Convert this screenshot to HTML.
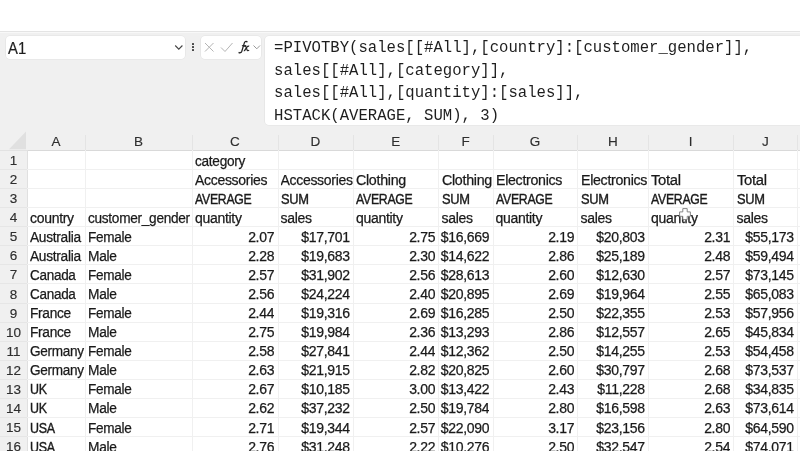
<!DOCTYPE html>
<html><head><meta charset="utf-8"><style>
html,body{margin:0;padding:0;width:800px;height:451px;overflow:hidden;background:#fff;position:relative;font-family:"Liberation Sans",sans-serif;}
.a{position:absolute;}
.fb{position:absolute;left:0;top:32px;width:800px;height:99px;background:#f0f0f0;border-top:1px solid #f8f8f8;}
.box{position:absolute;background:#fff;border-radius:4px;box-shadow:0 0 0 0.6px #e2e2e2;}
.mono{font-family:"Liberation Mono",monospace;}
.hdr{position:absolute;background:#f0f0f0;}
#wrap{position:absolute;left:0;top:0;width:800px;height:451px;will-change:transform;}
.ch{position:absolute;top:131px;height:19px;line-height:19px;text-align:center;font-size:13.5px;color:#2e2e2e;-webkit-text-stroke:0.15px #2e2e2e;}
.rh{position:absolute;left:0;width:27px;text-align:center;font-size:13.5px;color:#2e2e2e;-webkit-text-stroke:0.15px #2e2e2e;}
.c{position:absolute;font-size:14px;letter-spacing:-0.3px;color:#1a1a1a;white-space:nowrap;overflow:hidden;-webkit-text-stroke:0.25px #1a1a1a;}
.c span{display:inline-block;}
.r{text-align:right;}
.vl{position:absolute;width:1px;background:#f0f0f0;}
.hl{position:absolute;height:1px;background:#f0f0f0;}
</style></head><body><div id="wrap">

<div class="a" style="left:0;top:31px;width:800px;height:1px;background:#e4e4e4"></div>
<div class="fb"></div>
<div class="box" style="left:6px;top:36px;width:179px;height:23px;"></div>
<div class="a" style="left:8px;top:35.5px;height:23px;line-height:24px;font-size:16.5px;letter-spacing:0;transform:scaleX(0.9);transform-origin:0 50%;color:#1e1e1e;-webkit-text-stroke:0.2px #1e1e1e">A1</div>
<svg class="a" style="left:174px;top:44px" width="10" height="7" viewBox="0 0 10 7"><path d="M1.2 1.5 L4.8 5.2 L8.4 1.5" fill="none" stroke="#444" stroke-width="1.1"/></svg>
<div class="a" style="left:192.3px;top:43.4px;width:1.9px;height:1.9px;background:#444;border-radius:0.5px"></div>
<div class="a" style="left:192.3px;top:46.3px;width:1.9px;height:1.9px;background:#444;border-radius:0.5px"></div>
<div class="a" style="left:192.3px;top:49.2px;width:1.9px;height:1.9px;background:#444;border-radius:0.5px"></div>
<div class="box" style="left:201px;top:36px;width:60px;height:23px;"></div>
<svg class="a" style="left:201px;top:36px" width="60" height="23" viewBox="0 0 60 23"><path d="M4 7 L12.5 15.5 M12.5 7 L4 15.5" stroke="#b4b4b4" stroke-width="1" fill="none"/><path d="M20 11.5 L24 15.5 L31.5 7" stroke="#b4b4b4" stroke-width="1" fill="none"/><path d="M52.5 9.5 L55.8 12.8 L59 9.5" stroke="#999" stroke-width="1" fill="none"/></svg>
<svg class="a" style="left:230px;top:35px" width="26" height="25" viewBox="230 35 26 25"><path d="M247.3 42.2 C246.8 41 245.2 40.9 244.5 42.4 L241.8 51.2 C241.2 52.8 239.9 53.2 238.6 52.4" stroke="#222" stroke-width="1.25" fill="none"/><path d="M241.9 45.7 L246.3 45.7" stroke="#222" stroke-width="1.1" fill="none"/><path d="M244.3 46.6 C245.4 45.6 245.9 46.2 246.3 47.6 L247 49.8 C247.4 51 248.2 51 249.1 50.1" stroke="#222" stroke-width="1.2" fill="none"/><path d="M249.2 46.3 C248.4 45.8 247.7 46.2 246.9 47.2 L245.2 49.6 C244.7 50.5 244.3 51 243.8 50.6" stroke="#222" stroke-width="1.2" fill="none"/></svg>
<div class="box" style="left:265px;top:36px;width:540px;height:89px;"></div>
<div class="a mono" style="left:274px;top:37.4px;font-size:15.63px;line-height:22.4px;height:22.4px;color:#1e1e1e;white-space:pre;transform:scaleY(1.05);transform-origin:0 16px">=PIVOTBY(sales[[#All],[country]:[customer_gender]],</div>
<div class="a mono" style="left:274px;top:59.8px;font-size:15.63px;line-height:22.4px;height:22.4px;color:#1e1e1e;white-space:pre;transform:scaleY(1.05);transform-origin:0 16px">sales[[#All],[category]],</div>
<div class="a mono" style="left:274px;top:82.3px;font-size:15.63px;line-height:22.4px;height:22.4px;color:#1e1e1e;white-space:pre;transform:scaleY(1.05);transform-origin:0 16px">sales[[#All],[quantity]:[sales]],</div>
<div class="a mono" style="left:274px;top:104.8px;font-size:15.63px;line-height:22.4px;height:22.4px;color:#1e1e1e;white-space:pre;transform:scaleY(1.05);transform-origin:0 16px">HSTACK(AVERAGE, SUM), 3)</div>
<div class="hdr" style="left:0;top:131px;width:800px;height:19px"></div>
<div class="hdr" style="left:0;top:150px;width:27px;height:301px"></div>
<svg class="a" style="left:0;top:125px" width="28" height="26" viewBox="0 125 28 26"><path d="M26 131.6 L26 149.2 L9 149.2 Z" fill="#e0e0e0"/></svg>
<div class="ch" style="left:27.0px;width:58.0px;margin-top:0.5px">A</div>
<div class="vl" style="left:85px;top:135px;height:15px;background:#e4e4e4"></div>
<div class="ch" style="left:85.0px;width:107.0px;margin-top:0.5px">B</div>
<div class="vl" style="left:192px;top:135px;height:15px;background:#e4e4e4"></div>
<div class="ch" style="left:192.0px;width:85.5px;margin-top:0.5px">C</div>
<div class="vl" style="left:278px;top:135px;height:15px;background:#e4e4e4"></div>
<div class="ch" style="left:277.5px;width:75.5px;margin-top:0.5px">D</div>
<div class="vl" style="left:353px;top:135px;height:15px;background:#e4e4e4"></div>
<div class="ch" style="left:353.0px;width:85.5px;margin-top:0.5px">E</div>
<div class="vl" style="left:438px;top:135px;height:15px;background:#e4e4e4"></div>
<div class="ch" style="left:438.5px;width:54.0px;margin-top:0.5px">F</div>
<div class="vl" style="left:493px;top:135px;height:15px;background:#e4e4e4"></div>
<div class="ch" style="left:492.5px;width:85.0px;margin-top:0.5px">G</div>
<div class="vl" style="left:577px;top:135px;height:15px;background:#e4e4e4"></div>
<div class="ch" style="left:577.5px;width:70.5px;margin-top:0.5px">H</div>
<div class="vl" style="left:648px;top:135px;height:15px;background:#e4e4e4"></div>
<div class="ch" style="left:648.0px;width:85.5px;margin-top:0.5px">I</div>
<div class="vl" style="left:733px;top:135px;height:15px;background:#e4e4e4"></div>
<div class="ch" style="left:733.5px;width:63.5px;margin-top:0.5px">J</div>
<div class="vl" style="left:797px;top:135px;height:15px;background:#e4e4e4"></div>
<div class="hl" style="left:27px;top:150px;width:800px;background:#d9d9d9"></div>
<div class="hl" style="left:0;top:150px;width:27px;background:#e2e2e2"></div>
<div class="vl" style="left:27px;top:150px;height:301px;background:#e0e0e0"></div>
<div class="vl" style="left:85px;top:150px;height:301px"></div>
<div class="vl" style="left:192px;top:150px;height:301px"></div>
<div class="vl" style="left:278px;top:150px;height:301px"></div>
<div class="vl" style="left:353px;top:150px;height:301px"></div>
<div class="vl" style="left:438px;top:150px;height:301px"></div>
<div class="vl" style="left:493px;top:150px;height:301px"></div>
<div class="vl" style="left:577px;top:150px;height:301px"></div>
<div class="vl" style="left:648px;top:150px;height:301px"></div>
<div class="vl" style="left:733px;top:150px;height:301px"></div>
<div class="vl" style="left:797px;top:150px;height:301px"></div>
<div class="hl" style="left:27px;top:169px;width:800px"></div>
<div class="hl" style="left:0px;top:169px;width:27px;background:#e6e6e6"></div>
<div class="rh" style="top:151.0px;height:19.1px;line-height:19.1px">1</div>
<div class="c" style="left:195.0px;top:151.5px;height:19.1px;line-height:19.1px;width:602.0px"><span style="transform:scaleX(0.975);transform-origin:left 50%">category</span></div>
<div class="hl" style="left:27px;top:188px;width:800px"></div>
<div class="hl" style="left:0px;top:188px;width:27px;background:#e6e6e6"></div>
<div class="rh" style="top:170.1px;height:19.1px;line-height:19.1px">2</div>
<div class="c" style="left:195.0px;top:170.6px;height:19.1px;line-height:19.1px;width:82.5px">Accessories</div>
<div class="c" style="left:280.5px;top:170.6px;height:19.1px;line-height:19.1px;width:72.5px">Accessories</div>
<div class="c" style="left:356.0px;top:170.6px;height:19.1px;line-height:19.1px;width:82.5px"><span style="transform:scaleX(1.020);transform-origin:left 50%">Clothing</span></div>
<div class="c" style="left:441.5px;top:170.6px;height:19.1px;line-height:19.1px;width:51.0px"><span style="transform:scaleX(1.020);transform-origin:left 50%">Clothing</span></div>
<div class="c" style="left:495.5px;top:170.6px;height:19.1px;line-height:19.1px;width:82.0px"><span style="transform:scaleX(1.015);transform-origin:left 50%">Electronics</span></div>
<div class="c" style="left:580.5px;top:170.6px;height:19.1px;line-height:19.1px;width:67.5px"><span style="transform:scaleX(1.015);transform-origin:left 50%">Electronics</span></div>
<div class="c" style="left:651.0px;top:170.6px;height:19.1px;line-height:19.1px;width:82.5px"><span style="transform:scaleX(1.060);transform-origin:left 50%">Total</span></div>
<div class="c" style="left:736.5px;top:170.6px;height:19.1px;line-height:19.1px;width:60.5px"><span style="transform:scaleX(1.060);transform-origin:left 50%">Total</span></div>
<div class="hl" style="left:27px;top:207px;width:800px"></div>
<div class="hl" style="left:0px;top:207px;width:27px;background:#e6e6e6"></div>
<div class="rh" style="top:189.1px;height:19.1px;line-height:19.1px">3</div>
<div class="c" style="left:195.0px;top:189.6px;height:19.1px;line-height:19.1px;width:82.5px"><span style="transform:scaleX(0.875);transform-origin:left 50%;-webkit-text-stroke:0.38px #1a1a1a">AVERAGE</span></div>
<div class="c" style="left:280.5px;top:189.6px;height:19.1px;line-height:19.1px;width:72.5px"><span style="transform:scaleX(0.920);transform-origin:left 50%;-webkit-text-stroke:0.38px #1a1a1a">SUM</span></div>
<div class="c" style="left:356.0px;top:189.6px;height:19.1px;line-height:19.1px;width:82.5px"><span style="transform:scaleX(0.875);transform-origin:left 50%;-webkit-text-stroke:0.38px #1a1a1a">AVERAGE</span></div>
<div class="c" style="left:441.5px;top:189.6px;height:19.1px;line-height:19.1px;width:51.0px"><span style="transform:scaleX(0.920);transform-origin:left 50%;-webkit-text-stroke:0.38px #1a1a1a">SUM</span></div>
<div class="c" style="left:495.5px;top:189.6px;height:19.1px;line-height:19.1px;width:82.0px"><span style="transform:scaleX(0.875);transform-origin:left 50%;-webkit-text-stroke:0.38px #1a1a1a">AVERAGE</span></div>
<div class="c" style="left:580.5px;top:189.6px;height:19.1px;line-height:19.1px;width:67.5px"><span style="transform:scaleX(0.920);transform-origin:left 50%;-webkit-text-stroke:0.38px #1a1a1a">SUM</span></div>
<div class="c" style="left:651.0px;top:189.6px;height:19.1px;line-height:19.1px;width:82.5px"><span style="transform:scaleX(0.875);transform-origin:left 50%;-webkit-text-stroke:0.38px #1a1a1a">AVERAGE</span></div>
<div class="c" style="left:736.5px;top:189.6px;height:19.1px;line-height:19.1px;width:60.5px"><span style="transform:scaleX(0.920);transform-origin:left 50%;-webkit-text-stroke:0.38px #1a1a1a">SUM</span></div>
<div class="hl" style="left:27px;top:226px;width:800px"></div>
<div class="hl" style="left:0px;top:226px;width:27px;background:#e6e6e6"></div>
<div class="rh" style="top:208.2px;height:19.1px;line-height:19.1px">4</div>
<div class="c" style="left:30.0px;top:208.7px;height:19.1px;line-height:19.1px;width:55.0px"><span style="transform:scaleX(1.000);transform-origin:left 50%">country</span></div>
<div class="c" style="left:88.0px;top:208.7px;height:19.1px;line-height:19.1px;width:104.0px"><span style="transform:scaleX(0.975);transform-origin:left 50%">customer_gender</span></div>
<div class="c" style="left:195.0px;top:208.7px;height:19.1px;line-height:19.1px;width:82.5px">quantity</div>
<div class="c" style="left:280.5px;top:208.7px;height:19.1px;line-height:19.1px;width:72.5px">sales</div>
<div class="c" style="left:356.0px;top:208.7px;height:19.1px;line-height:19.1px;width:82.5px">quantity</div>
<div class="c" style="left:441.5px;top:208.7px;height:19.1px;line-height:19.1px;width:51.0px">sales</div>
<div class="c" style="left:495.5px;top:208.7px;height:19.1px;line-height:19.1px;width:82.0px">quantity</div>
<div class="c" style="left:580.5px;top:208.7px;height:19.1px;line-height:19.1px;width:67.5px">sales</div>
<div class="c" style="left:651.0px;top:208.7px;height:19.1px;line-height:19.1px;width:82.5px">quantity</div>
<div class="c" style="left:736.5px;top:208.7px;height:19.1px;line-height:19.1px;width:60.5px">sales</div>
<div class="hl" style="left:27px;top:245px;width:800px"></div>
<div class="hl" style="left:0px;top:245px;width:27px;background:#e6e6e6"></div>
<div class="rh" style="top:227.3px;height:19.1px;line-height:19.1px">5</div>
<div class="c" style="left:30.0px;top:227.8px;height:19.1px;line-height:19.1px;width:55.0px"><span style="transform:scaleX(0.980);transform-origin:left 50%">Australia</span></div>
<div class="c" style="left:88.0px;top:227.8px;height:19.1px;line-height:19.1px;width:104.0px"><span style="transform:scaleX(0.970);transform-origin:left 50%">Female</span></div>
<div class="c r" style="left:192.0px;width:82.2px;top:227.8px;height:19.1px;line-height:19.1px">2.07</div>
<div class="c r" style="left:277.5px;width:72.2px;top:227.8px;height:19.1px;line-height:19.1px">$17,701</div>
<div class="c r" style="left:353.0px;width:82.2px;top:227.8px;height:19.1px;line-height:19.1px">2.75</div>
<div class="c r" style="left:438.5px;width:50.7px;top:227.8px;height:19.1px;line-height:19.1px">$16,669</div>
<div class="c r" style="left:492.5px;width:81.7px;top:227.8px;height:19.1px;line-height:19.1px">2.19</div>
<div class="c r" style="left:577.5px;width:67.2px;top:227.8px;height:19.1px;line-height:19.1px">$20,803</div>
<div class="c r" style="left:648.0px;width:82.2px;top:227.8px;height:19.1px;line-height:19.1px">2.31</div>
<div class="c r" style="left:733.5px;width:60.2px;top:227.8px;height:19.1px;line-height:19.1px">$55,173</div>
<div class="hl" style="left:27px;top:264px;width:800px"></div>
<div class="hl" style="left:0px;top:264px;width:27px;background:#e6e6e6"></div>
<div class="rh" style="top:246.3px;height:19.1px;line-height:19.1px">6</div>
<div class="c" style="left:30.0px;top:246.8px;height:19.1px;line-height:19.1px;width:55.0px"><span style="transform:scaleX(0.980);transform-origin:left 50%">Australia</span></div>
<div class="c" style="left:88.0px;top:246.8px;height:19.1px;line-height:19.1px;width:104.0px"><span style="transform:scaleX(0.980);transform-origin:left 50%">Male</span></div>
<div class="c r" style="left:192.0px;width:82.2px;top:246.8px;height:19.1px;line-height:19.1px">2.28</div>
<div class="c r" style="left:277.5px;width:72.2px;top:246.8px;height:19.1px;line-height:19.1px">$19,683</div>
<div class="c r" style="left:353.0px;width:82.2px;top:246.8px;height:19.1px;line-height:19.1px">2.30</div>
<div class="c r" style="left:438.5px;width:50.7px;top:246.8px;height:19.1px;line-height:19.1px">$14,622</div>
<div class="c r" style="left:492.5px;width:81.7px;top:246.8px;height:19.1px;line-height:19.1px">2.86</div>
<div class="c r" style="left:577.5px;width:67.2px;top:246.8px;height:19.1px;line-height:19.1px">$25,189</div>
<div class="c r" style="left:648.0px;width:82.2px;top:246.8px;height:19.1px;line-height:19.1px">2.48</div>
<div class="c r" style="left:733.5px;width:60.2px;top:246.8px;height:19.1px;line-height:19.1px">$59,494</div>
<div class="hl" style="left:27px;top:283px;width:800px"></div>
<div class="hl" style="left:0px;top:283px;width:27px;background:#e6e6e6"></div>
<div class="rh" style="top:265.4px;height:19.1px;line-height:19.1px">7</div>
<div class="c" style="left:30.0px;top:265.9px;height:19.1px;line-height:19.1px;width:55.0px"><span style="transform:scaleX(0.965);transform-origin:left 50%">Canada</span></div>
<div class="c" style="left:88.0px;top:265.9px;height:19.1px;line-height:19.1px;width:104.0px"><span style="transform:scaleX(0.970);transform-origin:left 50%">Female</span></div>
<div class="c r" style="left:192.0px;width:82.2px;top:265.9px;height:19.1px;line-height:19.1px">2.57</div>
<div class="c r" style="left:277.5px;width:72.2px;top:265.9px;height:19.1px;line-height:19.1px">$31,902</div>
<div class="c r" style="left:353.0px;width:82.2px;top:265.9px;height:19.1px;line-height:19.1px">2.56</div>
<div class="c r" style="left:438.5px;width:50.7px;top:265.9px;height:19.1px;line-height:19.1px">$28,613</div>
<div class="c r" style="left:492.5px;width:81.7px;top:265.9px;height:19.1px;line-height:19.1px">2.60</div>
<div class="c r" style="left:577.5px;width:67.2px;top:265.9px;height:19.1px;line-height:19.1px">$12,630</div>
<div class="c r" style="left:648.0px;width:82.2px;top:265.9px;height:19.1px;line-height:19.1px">2.57</div>
<div class="c r" style="left:733.5px;width:60.2px;top:265.9px;height:19.1px;line-height:19.1px">$73,145</div>
<div class="hl" style="left:27px;top:303px;width:800px"></div>
<div class="hl" style="left:0px;top:303px;width:27px;background:#e6e6e6"></div>
<div class="rh" style="top:284.5px;height:19.1px;line-height:19.1px">8</div>
<div class="c" style="left:30.0px;top:285.0px;height:19.1px;line-height:19.1px;width:55.0px"><span style="transform:scaleX(0.965);transform-origin:left 50%">Canada</span></div>
<div class="c" style="left:88.0px;top:285.0px;height:19.1px;line-height:19.1px;width:104.0px"><span style="transform:scaleX(0.980);transform-origin:left 50%">Male</span></div>
<div class="c r" style="left:192.0px;width:82.2px;top:285.0px;height:19.1px;line-height:19.1px">2.56</div>
<div class="c r" style="left:277.5px;width:72.2px;top:285.0px;height:19.1px;line-height:19.1px">$24,224</div>
<div class="c r" style="left:353.0px;width:82.2px;top:285.0px;height:19.1px;line-height:19.1px">2.40</div>
<div class="c r" style="left:438.5px;width:50.7px;top:285.0px;height:19.1px;line-height:19.1px">$20,895</div>
<div class="c r" style="left:492.5px;width:81.7px;top:285.0px;height:19.1px;line-height:19.1px">2.69</div>
<div class="c r" style="left:577.5px;width:67.2px;top:285.0px;height:19.1px;line-height:19.1px">$19,964</div>
<div class="c r" style="left:648.0px;width:82.2px;top:285.0px;height:19.1px;line-height:19.1px">2.55</div>
<div class="c r" style="left:733.5px;width:60.2px;top:285.0px;height:19.1px;line-height:19.1px">$65,083</div>
<div class="hl" style="left:27px;top:322px;width:800px"></div>
<div class="hl" style="left:0px;top:322px;width:27px;background:#e6e6e6"></div>
<div class="rh" style="top:303.6px;height:19.1px;line-height:19.1px">9</div>
<div class="c" style="left:30.0px;top:304.1px;height:19.1px;line-height:19.1px;width:55.0px"><span style="transform:scaleX(0.980);transform-origin:left 50%">France</span></div>
<div class="c" style="left:88.0px;top:304.1px;height:19.1px;line-height:19.1px;width:104.0px"><span style="transform:scaleX(0.970);transform-origin:left 50%">Female</span></div>
<div class="c r" style="left:192.0px;width:82.2px;top:304.1px;height:19.1px;line-height:19.1px">2.44</div>
<div class="c r" style="left:277.5px;width:72.2px;top:304.1px;height:19.1px;line-height:19.1px">$19,316</div>
<div class="c r" style="left:353.0px;width:82.2px;top:304.1px;height:19.1px;line-height:19.1px">2.69</div>
<div class="c r" style="left:438.5px;width:50.7px;top:304.1px;height:19.1px;line-height:19.1px">$16,285</div>
<div class="c r" style="left:492.5px;width:81.7px;top:304.1px;height:19.1px;line-height:19.1px">2.50</div>
<div class="c r" style="left:577.5px;width:67.2px;top:304.1px;height:19.1px;line-height:19.1px">$22,355</div>
<div class="c r" style="left:648.0px;width:82.2px;top:304.1px;height:19.1px;line-height:19.1px">2.53</div>
<div class="c r" style="left:733.5px;width:60.2px;top:304.1px;height:19.1px;line-height:19.1px">$57,956</div>
<div class="hl" style="left:27px;top:341px;width:800px"></div>
<div class="hl" style="left:0px;top:341px;width:27px;background:#e6e6e6"></div>
<div class="rh" style="top:322.6px;height:19.1px;line-height:19.1px">10</div>
<div class="c" style="left:30.0px;top:323.1px;height:19.1px;line-height:19.1px;width:55.0px"><span style="transform:scaleX(0.980);transform-origin:left 50%">France</span></div>
<div class="c" style="left:88.0px;top:323.1px;height:19.1px;line-height:19.1px;width:104.0px"><span style="transform:scaleX(0.980);transform-origin:left 50%">Male</span></div>
<div class="c r" style="left:192.0px;width:82.2px;top:323.1px;height:19.1px;line-height:19.1px">2.75</div>
<div class="c r" style="left:277.5px;width:72.2px;top:323.1px;height:19.1px;line-height:19.1px">$19,984</div>
<div class="c r" style="left:353.0px;width:82.2px;top:323.1px;height:19.1px;line-height:19.1px">2.36</div>
<div class="c r" style="left:438.5px;width:50.7px;top:323.1px;height:19.1px;line-height:19.1px">$13,293</div>
<div class="c r" style="left:492.5px;width:81.7px;top:323.1px;height:19.1px;line-height:19.1px">2.86</div>
<div class="c r" style="left:577.5px;width:67.2px;top:323.1px;height:19.1px;line-height:19.1px">$12,557</div>
<div class="c r" style="left:648.0px;width:82.2px;top:323.1px;height:19.1px;line-height:19.1px">2.65</div>
<div class="c r" style="left:733.5px;width:60.2px;top:323.1px;height:19.1px;line-height:19.1px">$45,834</div>
<div class="hl" style="left:27px;top:360px;width:800px"></div>
<div class="hl" style="left:0px;top:360px;width:27px;background:#e6e6e6"></div>
<div class="rh" style="top:341.7px;height:19.1px;line-height:19.1px">11</div>
<div class="c" style="left:30.0px;top:342.2px;height:19.1px;line-height:19.1px;width:55.0px"><span style="transform:scaleX(0.970);transform-origin:left 50%">Germany</span></div>
<div class="c" style="left:88.0px;top:342.2px;height:19.1px;line-height:19.1px;width:104.0px"><span style="transform:scaleX(0.970);transform-origin:left 50%">Female</span></div>
<div class="c r" style="left:192.0px;width:82.2px;top:342.2px;height:19.1px;line-height:19.1px">2.58</div>
<div class="c r" style="left:277.5px;width:72.2px;top:342.2px;height:19.1px;line-height:19.1px">$27,841</div>
<div class="c r" style="left:353.0px;width:82.2px;top:342.2px;height:19.1px;line-height:19.1px">2.44</div>
<div class="c r" style="left:438.5px;width:50.7px;top:342.2px;height:19.1px;line-height:19.1px">$12,362</div>
<div class="c r" style="left:492.5px;width:81.7px;top:342.2px;height:19.1px;line-height:19.1px">2.50</div>
<div class="c r" style="left:577.5px;width:67.2px;top:342.2px;height:19.1px;line-height:19.1px">$14,255</div>
<div class="c r" style="left:648.0px;width:82.2px;top:342.2px;height:19.1px;line-height:19.1px">2.53</div>
<div class="c r" style="left:733.5px;width:60.2px;top:342.2px;height:19.1px;line-height:19.1px">$54,458</div>
<div class="hl" style="left:27px;top:379px;width:800px"></div>
<div class="hl" style="left:0px;top:379px;width:27px;background:#e6e6e6"></div>
<div class="rh" style="top:360.8px;height:19.1px;line-height:19.1px">12</div>
<div class="c" style="left:30.0px;top:361.3px;height:19.1px;line-height:19.1px;width:55.0px"><span style="transform:scaleX(0.970);transform-origin:left 50%">Germany</span></div>
<div class="c" style="left:88.0px;top:361.3px;height:19.1px;line-height:19.1px;width:104.0px"><span style="transform:scaleX(0.980);transform-origin:left 50%">Male</span></div>
<div class="c r" style="left:192.0px;width:82.2px;top:361.3px;height:19.1px;line-height:19.1px">2.63</div>
<div class="c r" style="left:277.5px;width:72.2px;top:361.3px;height:19.1px;line-height:19.1px">$21,915</div>
<div class="c r" style="left:353.0px;width:82.2px;top:361.3px;height:19.1px;line-height:19.1px">2.82</div>
<div class="c r" style="left:438.5px;width:50.7px;top:361.3px;height:19.1px;line-height:19.1px">$20,825</div>
<div class="c r" style="left:492.5px;width:81.7px;top:361.3px;height:19.1px;line-height:19.1px">2.60</div>
<div class="c r" style="left:577.5px;width:67.2px;top:361.3px;height:19.1px;line-height:19.1px">$30,797</div>
<div class="c r" style="left:648.0px;width:82.2px;top:361.3px;height:19.1px;line-height:19.1px">2.68</div>
<div class="c r" style="left:733.5px;width:60.2px;top:361.3px;height:19.1px;line-height:19.1px">$73,537</div>
<div class="hl" style="left:27px;top:398px;width:800px"></div>
<div class="hl" style="left:0px;top:398px;width:27px;background:#e6e6e6"></div>
<div class="rh" style="top:379.8px;height:19.1px;line-height:19.1px">13</div>
<div class="c" style="left:30.0px;top:380.3px;height:19.1px;line-height:19.1px;width:55.0px"><span style="transform:scaleX(0.890);transform-origin:left 50%;-webkit-text-stroke:0.38px #1a1a1a">UK</span></div>
<div class="c" style="left:88.0px;top:380.3px;height:19.1px;line-height:19.1px;width:104.0px"><span style="transform:scaleX(0.970);transform-origin:left 50%">Female</span></div>
<div class="c r" style="left:192.0px;width:82.2px;top:380.3px;height:19.1px;line-height:19.1px">2.67</div>
<div class="c r" style="left:277.5px;width:72.2px;top:380.3px;height:19.1px;line-height:19.1px">$10,185</div>
<div class="c r" style="left:353.0px;width:82.2px;top:380.3px;height:19.1px;line-height:19.1px">3.00</div>
<div class="c r" style="left:438.5px;width:50.7px;top:380.3px;height:19.1px;line-height:19.1px">$13,422</div>
<div class="c r" style="left:492.5px;width:81.7px;top:380.3px;height:19.1px;line-height:19.1px">2.43</div>
<div class="c r" style="left:577.5px;width:67.2px;top:380.3px;height:19.1px;line-height:19.1px">$11,228</div>
<div class="c r" style="left:648.0px;width:82.2px;top:380.3px;height:19.1px;line-height:19.1px">2.68</div>
<div class="c r" style="left:733.5px;width:60.2px;top:380.3px;height:19.1px;line-height:19.1px">$34,835</div>
<div class="hl" style="left:27px;top:417px;width:800px"></div>
<div class="hl" style="left:0px;top:417px;width:27px;background:#e6e6e6"></div>
<div class="rh" style="top:398.9px;height:19.1px;line-height:19.1px">14</div>
<div class="c" style="left:30.0px;top:399.4px;height:19.1px;line-height:19.1px;width:55.0px"><span style="transform:scaleX(0.890);transform-origin:left 50%;-webkit-text-stroke:0.38px #1a1a1a">UK</span></div>
<div class="c" style="left:88.0px;top:399.4px;height:19.1px;line-height:19.1px;width:104.0px"><span style="transform:scaleX(0.980);transform-origin:left 50%">Male</span></div>
<div class="c r" style="left:192.0px;width:82.2px;top:399.4px;height:19.1px;line-height:19.1px">2.62</div>
<div class="c r" style="left:277.5px;width:72.2px;top:399.4px;height:19.1px;line-height:19.1px">$37,232</div>
<div class="c r" style="left:353.0px;width:82.2px;top:399.4px;height:19.1px;line-height:19.1px">2.50</div>
<div class="c r" style="left:438.5px;width:50.7px;top:399.4px;height:19.1px;line-height:19.1px">$19,784</div>
<div class="c r" style="left:492.5px;width:81.7px;top:399.4px;height:19.1px;line-height:19.1px">2.80</div>
<div class="c r" style="left:577.5px;width:67.2px;top:399.4px;height:19.1px;line-height:19.1px">$16,598</div>
<div class="c r" style="left:648.0px;width:82.2px;top:399.4px;height:19.1px;line-height:19.1px">2.63</div>
<div class="c r" style="left:733.5px;width:60.2px;top:399.4px;height:19.1px;line-height:19.1px">$73,614</div>
<div class="hl" style="left:27px;top:436px;width:800px"></div>
<div class="hl" style="left:0px;top:436px;width:27px;background:#e6e6e6"></div>
<div class="rh" style="top:418.0px;height:19.1px;line-height:19.1px">15</div>
<div class="c" style="left:30.0px;top:418.5px;height:19.1px;line-height:19.1px;width:55.0px"><span style="transform:scaleX(0.890);transform-origin:left 50%;-webkit-text-stroke:0.38px #1a1a1a">USA</span></div>
<div class="c" style="left:88.0px;top:418.5px;height:19.1px;line-height:19.1px;width:104.0px"><span style="transform:scaleX(0.970);transform-origin:left 50%">Female</span></div>
<div class="c r" style="left:192.0px;width:82.2px;top:418.5px;height:19.1px;line-height:19.1px">2.71</div>
<div class="c r" style="left:277.5px;width:72.2px;top:418.5px;height:19.1px;line-height:19.1px">$19,344</div>
<div class="c r" style="left:353.0px;width:82.2px;top:418.5px;height:19.1px;line-height:19.1px">2.57</div>
<div class="c r" style="left:438.5px;width:50.7px;top:418.5px;height:19.1px;line-height:19.1px">$22,090</div>
<div class="c r" style="left:492.5px;width:81.7px;top:418.5px;height:19.1px;line-height:19.1px">3.17</div>
<div class="c r" style="left:577.5px;width:67.2px;top:418.5px;height:19.1px;line-height:19.1px">$23,156</div>
<div class="c r" style="left:648.0px;width:82.2px;top:418.5px;height:19.1px;line-height:19.1px">2.80</div>
<div class="c r" style="left:733.5px;width:60.2px;top:418.5px;height:19.1px;line-height:19.1px">$64,590</div>
<div class="hl" style="left:27px;top:455px;width:800px"></div>
<div class="hl" style="left:0px;top:455px;width:27px;background:#e6e6e6"></div>
<div class="rh" style="top:437.1px;height:19.1px;line-height:19.1px">16</div>
<div class="c" style="left:30.0px;top:437.6px;height:19.1px;line-height:19.1px;width:55.0px"><span style="transform:scaleX(0.890);transform-origin:left 50%;-webkit-text-stroke:0.38px #1a1a1a">USA</span></div>
<div class="c" style="left:88.0px;top:437.6px;height:19.1px;line-height:19.1px;width:104.0px"><span style="transform:scaleX(0.980);transform-origin:left 50%">Male</span></div>
<div class="c r" style="left:192.0px;width:82.2px;top:437.6px;height:19.1px;line-height:19.1px">2.76</div>
<div class="c r" style="left:277.5px;width:72.2px;top:437.6px;height:19.1px;line-height:19.1px">$31,248</div>
<div class="c r" style="left:353.0px;width:82.2px;top:437.6px;height:19.1px;line-height:19.1px">2.22</div>
<div class="c r" style="left:438.5px;width:50.7px;top:437.6px;height:19.1px;line-height:19.1px">$10,276</div>
<div class="c r" style="left:492.5px;width:81.7px;top:437.6px;height:19.1px;line-height:19.1px">2.50</div>
<div class="c r" style="left:577.5px;width:67.2px;top:437.6px;height:19.1px;line-height:19.1px">$32,547</div>
<div class="c r" style="left:648.0px;width:82.2px;top:437.6px;height:19.1px;line-height:19.1px">2.54</div>
<div class="c r" style="left:733.5px;width:60.2px;top:437.6px;height:19.1px;line-height:19.1px">$74,071</div>
<svg class="a" style="left:670px;top:200px" width="30" height="30" viewBox="670 200 30 30"><path d="M682.8 208.6 L687.2 208.6 L687.2 211.9 L690.4 211.9 L690.4 216.3 L687.2 216.3 L687.2 219.6 L682.8 219.6 L682.8 216.3 L679.6 216.3 L679.6 211.9 L682.8 211.9 Z" fill="#fff" stroke="#7a7a7a" stroke-width="0.9"/></svg>
</div></body></html>
